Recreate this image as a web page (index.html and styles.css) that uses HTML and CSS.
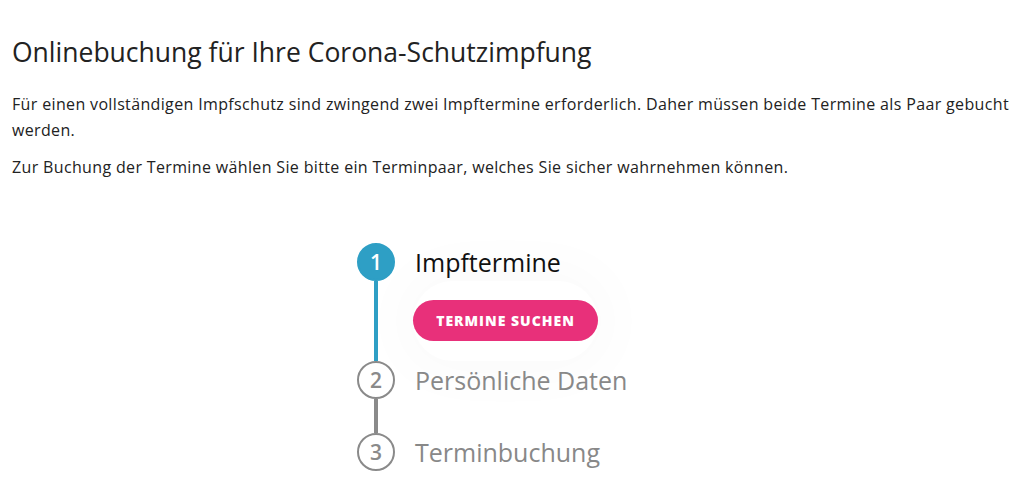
FILE: index.html
```html
<!DOCTYPE html>
<html lang="de">
<head>
<meta charset="utf-8">
<title>Onlinebuchung</title>
<link rel="stylesheet" href="styles.css">
</head>
<body>
<main class="page">
  <h1 class="title">Onlinebuchung für Ihre Corona-Schutzimpfung</h1>
  <p class="text">Für einen vollständigen Impfschutz sind zwingend zwei Impftermine erforderlich. Daher müssen beide Termine als Paar gebucht werden.</p>
  <p class="text">Zur Buchung der Termine wählen Sie bitte ein Terminpaar, welches Sie sicher wahrnehmen können.</p>

  <ol class="stepper">
    <li class="step step--active">
      <div class="step-head">
        <span class="step-num">1</span>
        <span class="step-label">Impftermine</span>
      </div>
      <div class="step-body">
        <span class="step-line"></span>
        <div class="step-content">
          <button class="btn" type="button">Termine suchen</button>
        </div>
      </div>
    </li>
    <li class="step">
      <div class="step-head">
        <span class="step-num">2</span>
        <span class="step-label">Persönliche Daten</span>
      </div>
      <div class="step-body step-body--empty">
        <span class="step-line"></span>
      </div>
    </li>
    <li class="step">
      <div class="step-head">
        <span class="step-num">3</span>
        <span class="step-label">Terminbuchung</span>
      </div>
    </li>
  </ol>
</main>
</body>
</html>
```

FILE: styles.css
```css
* { box-sizing: border-box; }
html, body { margin: 0; padding: 0; background: #fff; }
body {
  font-family: "Open Sans", "Noto Sans", sans-serif;
  color: #222;
}
.page {
  padding: 36px 12px 0 12px;
}
.title {
  margin: 0 0 23px 0;
  font-size: 26.5px;
  line-height: 32px;
  font-weight: 400;
  color: #222;
}
.text {
  margin: 0 0 11px 0;
  font-size: 16px;
  line-height: 26px;
  letter-spacing: 0.35px;
  color: #222;
}
.stepper {
  list-style: none;
  margin: 63px auto 0 auto;
  padding: 0;
  width: 310px;
}
.step-head {
  display: flex;
  align-items: center;
  gap: 20px;
  height: 38px;
}
.step-num {
  flex: 0 0 38px;
  width: 38px;
  height: 38px;
  border-radius: 50%;
  border: 2px solid #8a8a8a;
  color: #8a8a8a;
  display: flex;
  align-items: center;
  justify-content: center;
  font-size: 21px;
  font-weight: 600;
}
.step-label {
  font-size: 25px;
  font-weight: 500;
  color: #888;
  white-space: nowrap;
}
.step--active .step-num {
  background: #2e9fc5;
  border-color: #2e9fc5;
  color: #fff;
}
.step--active .step-label { color: #111; }
.step-body {
  display: flex;
  gap: 35px;
}
.step-line {
  flex: 0 0 4px;
  width: 4px;
  margin-left: 17px;
  background: #8a8a8a;
}
.step--active .step-line { background: #2e9fc5; }
.step-body--empty { height: 34px; }
.step-content {
  padding: 19px 0 20px 0;
  border-radius: 40px;
  box-shadow: 0 0 60px 12px rgba(0,0,0,0.025);
}
.btn {
  display: block;
  height: 41px;
  width: 185px;
  border: 0;
  border-radius: 21px;
  background: #e8307a;
  color: #fff;
  font-family: inherit;
  font-size: 14px;
  font-weight: 800;
  letter-spacing: 1px;
  text-transform: uppercase;
  cursor: pointer;
}
```
